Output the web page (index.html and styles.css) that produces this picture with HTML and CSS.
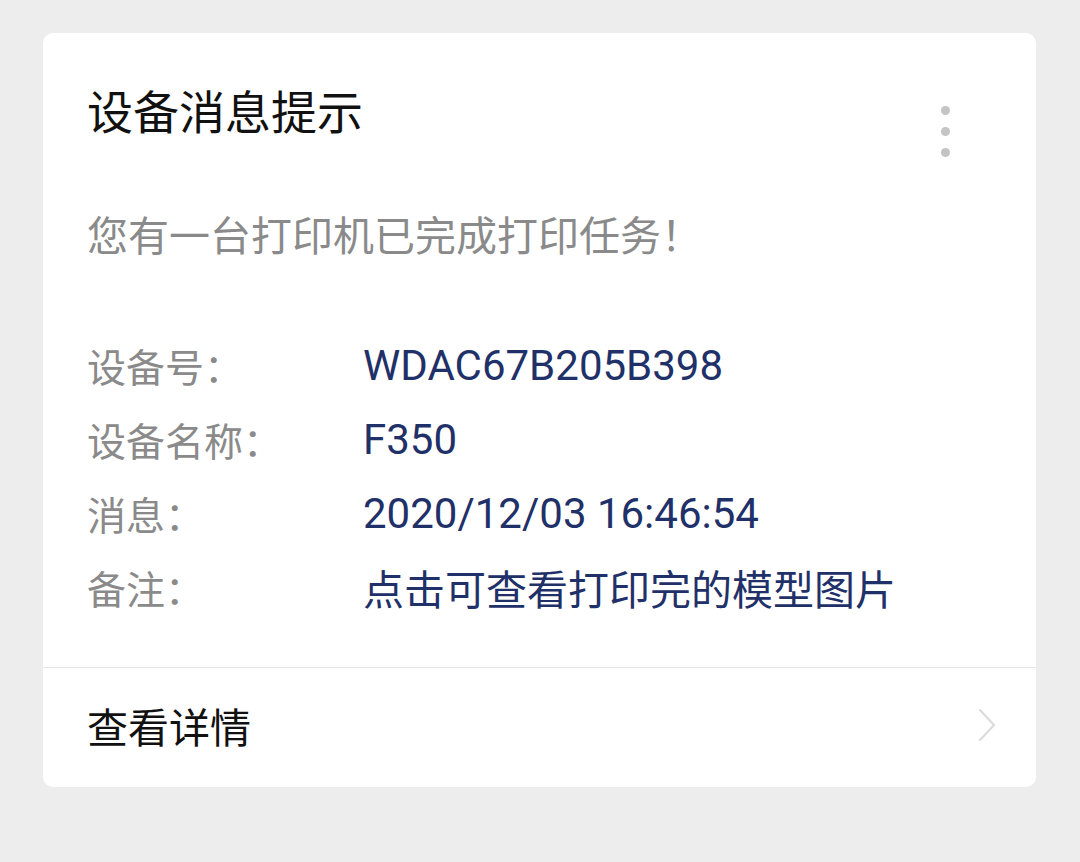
FILE: index.html
```html
<!DOCTYPE html>
<html lang="zh-CN">
<head>
  <meta charset="UTF-8" />
  <meta name="viewport" content="width=device-width, initial-scale=1.0" />
  <title>设备消息提示</title>
  <link rel="stylesheet" href="styles.css">
</head>
<body>
  <div class="card">
    <div class="card-body">
      <div class="head">
        <h1 class="title">设备消息提示</h1>
        <div class="more">
          <span></span>
          <span></span>
          <span></span>
        </div>
      </div>
      <p class="desc">您有一台打印机已完成打印任务！</p>
      <div class="info">
        <div class="row">
          <span class="label">设备号：</span>
          <span class="value">WDAC67B205B398</span>
        </div>
        <div class="row">
          <span class="label">设备名称：</span>
          <span class="value">F350</span>
        </div>
        <div class="row">
          <span class="label">消息：</span>
          <span class="value">2020/12/03 16:46:54</span>
        </div>
        <div class="row">
          <span class="label">备注：</span>
          <span class="value value-cn">点击可查看打印完的模型图片</span>
        </div>
      </div>
    </div>
    <div class="card-foot">
      <span>查看详情</span>
      <svg class="arrow" width="20" height="36" viewBox="0 0 20 36">
        <polyline points="3,3 17,18 3,33" fill="none" stroke="#dcdcdc" stroke-width="2.2" stroke-linecap="round" stroke-linejoin="round" />
      </svg>
    </div>
  </div>
</body>
</html>
```

FILE: styles.css
```css
* { box-sizing: border-box; }
body {
  margin: 0;
  background-color: #ededed;
  font-family: Roboto, "Noto Sans CJK SC", sans-serif;
}
.card {
  width: 993px;
  margin: 33px 0 0 43px;
  background: #fff;
  border-radius: 10px;
  overflow: hidden;
}
.card-body {
  padding: 50px 46px 43px 44px;
  border-bottom: 1px solid #e6e6e6;
}
.head {
  display: flex;
  justify-content: space-between;
  height: 60px;
}
.title {
  margin: 0;
  font-size: 46px;
  font-weight: normal;
  line-height: 60px;
  color: #111;
}
.more {
  display: flex;
  flex-direction: column;
  gap: 12px;
  margin: 23px 40px 0 0;
}
.more span {
  flex: none;
  width: 9px;
  height: 9px;
  border-radius: 50%;
  background: #c4c4c4;
}
.desc {
  margin: 64px 0 0 0;
  height: 60px;
  font-size: 41px;
  line-height: 60px;
  color: #8a8a8a;
}
.info {
  margin-top: 61px;
}
.row {
  display: flex;
  align-items: center;
  height: 74px;
}
.label {
  width: 276px;
  flex: none;
  font-size: 39px;
  color: #8a8a8a;
}
.value {
  font-size: 42px;
  color: #1f3168;
}
.value-cn {
  font-size: 41px;
}
.card-foot {
  display: flex;
  justify-content: space-between;
  align-items: center;
  height: 119px;
  padding: 0 39px 6px 44px;
  font-size: 41px;
  color: #111;
}
.arrow {
  display: block;
}
```
